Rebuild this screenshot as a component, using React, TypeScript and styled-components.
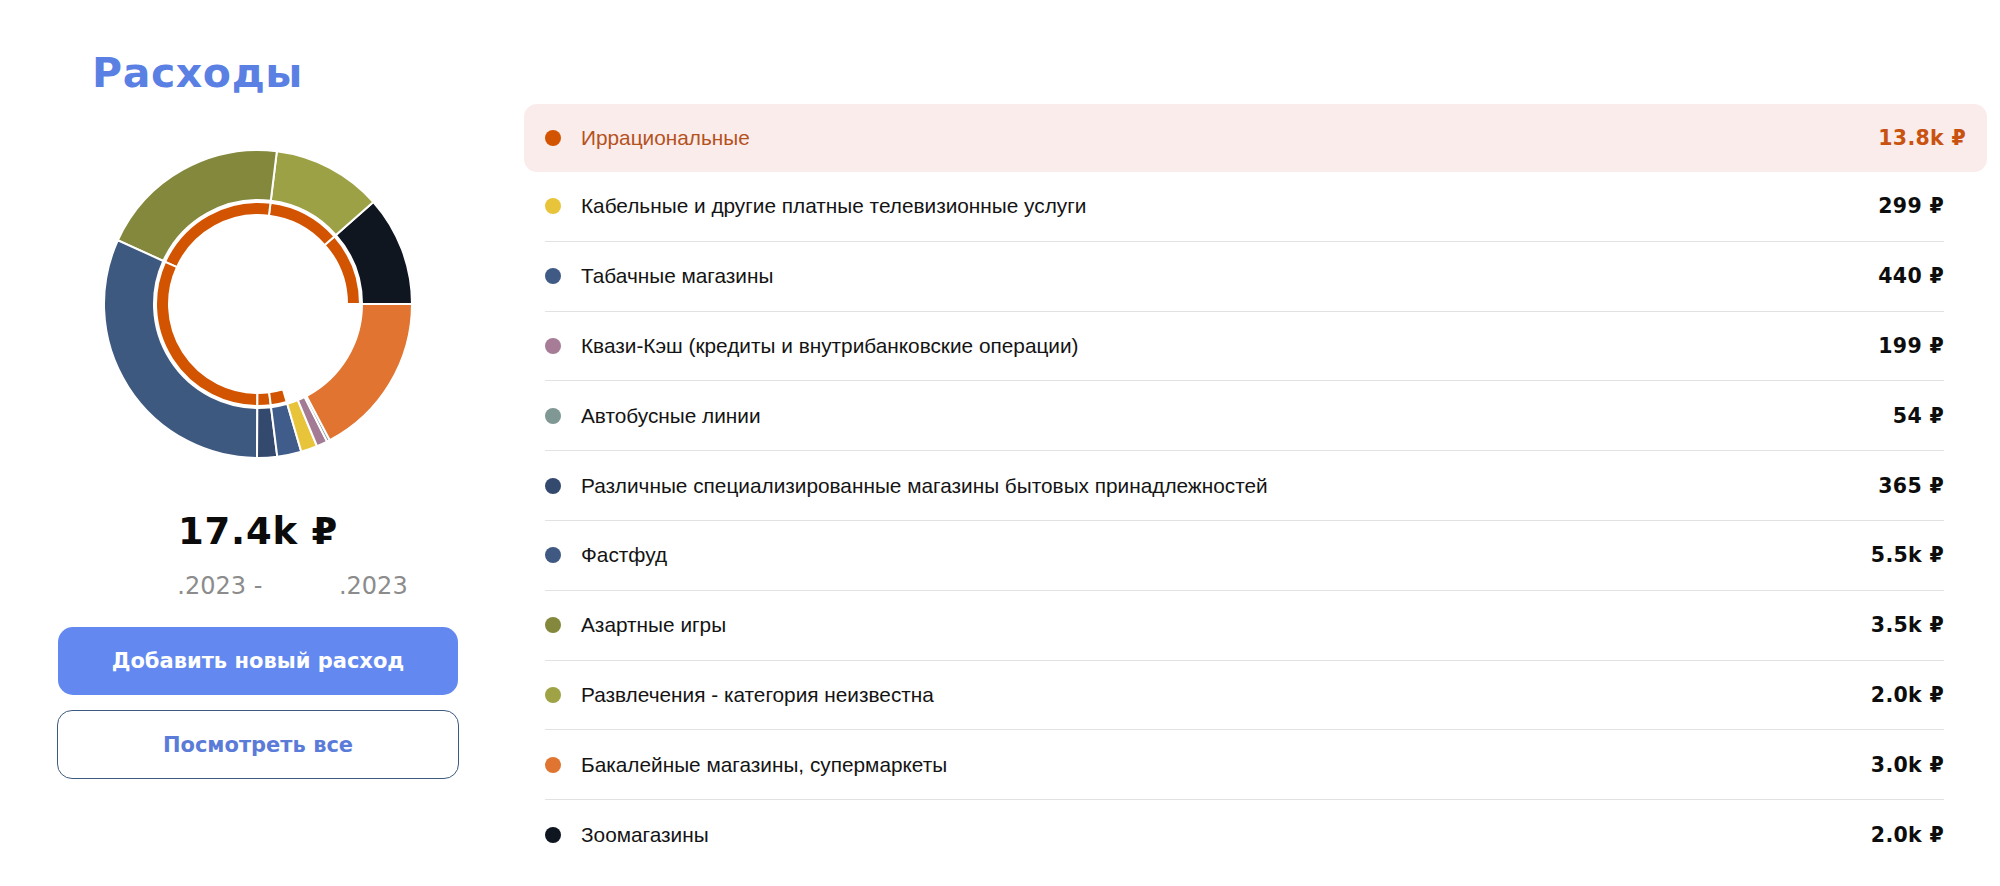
import React from 'react';
import styled, { createGlobalStyle } from 'styled-components';

const GlobalStyle = createGlobalStyle`
  html, body { margin: 0; padding: 0; background: #ffffff; }
  body { font-family: "Liberation Sans", Arial, sans-serif; }
  * { box-sizing: border-box; }
`;

const Page = styled.div`
  display: flex;
  align-items: flex-start;
  width: 2000px;
  min-height: 886px;
  padding: 0 13px 0 57px;
`;

const LeftCol = styled.div`
  width: 402px;
  flex: none;
  display: flex;
  flex-direction: column;
  align-items: center;
`;

const Title = styled.h1`
  align-self: flex-start;
  margin: 49px 0 0 35px;
  font-family: "DejaVu Sans", sans-serif;
  font-weight: 700;
  font-size: 41px;
  line-height: 48px;
  color: #5b80e3;
  letter-spacing: 0.6px;
`;

const ChartBox = styled.div`
  margin-top: 52px;
  width: 310px;
  height: 310px;
`;

const Total = styled.div`
  margin-top: 51px;
  font-family: "DejaVu Sans", sans-serif;
  font-weight: 700;
  font-size: 37px;
  line-height: 44px;
  color: #0b0b0b;
  letter-spacing: 0.8px;
`;

const Period = styled.div`
  margin-top: 18px;
  font-family: "DejaVu Sans", sans-serif;
  font-size: 24px;
  line-height: 28px;
  color: #8c8c8c;
  white-space: pre;
`;

const Redacted = styled.span<{ $w: number }>`
  display: inline-block;
  width: ${(p) => p.$w}px;
`;

const PrimaryButton = styled.button`
  margin-top: 27px;
  width: 400px;
  height: 68px;
  border: none;
  border-radius: 15px;
  background: #6389f0;
  color: #ffffff;
  font-family: "DejaVu Sans", sans-serif;
  font-weight: 700;
  font-size: 21px;
  cursor: pointer;
`;

const SecondaryButton = styled.button`
  margin-top: 15px;
  width: 402px;
  height: 69px;
  border: 1.5px solid #3d5b7e;
  border-radius: 15px;
  background: #ffffff;
  color: #5b7bd8;
  font-family: "DejaVu Sans", sans-serif;
  font-weight: 700;
  font-size: 21px;
  cursor: pointer;
`;

const List = styled.div`
  margin-left: 65px;
  margin-top: 104px;
  flex: 1;
  display: flex;
  flex-direction: column;
`;

const Row = styled.div<{ $active?: boolean; $last?: boolean }>`
  display: flex;
  align-items: center;
  ${(p) =>
    p.$active
      ? `
    height: 68px;
    margin: 0;
    padding: 0 21px;
    background: #fbecec;
    border-radius: 13px;
  `
      : `
    height: ${p.$last ? '68.8px' : '69.8px'};
    margin: 0 43px 0 21px;
    padding: 0;
    border-bottom: ${p.$last ? 'none' : '1px solid #e2e2e2'};
  `}
`;

const Dot = styled.span<{ $color: string }>`
  width: 16px;
  height: 16px;
  border-radius: 50%;
  background: ${(p) => p.$color};
  flex: none;
`;

const Label = styled.span<{ $active?: boolean }>`
  margin-left: 20px;
  flex: 1;
  font-family: "Liberation Sans", Arial, sans-serif;
  font-size: 20.8px;
  color: ${(p) => (p.$active ? '#b4521d' : '#141414')};
`;

const Amount = styled.span<{ $active?: boolean }>`
  font-family: "DejaVu Sans", sans-serif;
  font-weight: 700;
  font-size: 20.5px;
  letter-spacing: 0.3px;
  color: ${(p) => (p.$active ? '#c8520f' : '#0d0d0d')};
  white-space: nowrap;
`;

type Item = { label: string; amount: string; color: string };

const items: Item[] = [
  { label: 'Кабельные и другие платные телевизионные услуги', amount: '299 ₽', color: '#e8c43a' },
  { label: 'Табачные магазины', amount: '440 ₽', color: '#405a86' },
  { label: 'Квази-Кэш (кредиты и внутрибанковские операции)', amount: '199 ₽', color: '#a67c96' },
  { label: 'Автобусные линии', amount: '54 ₽', color: '#7f9894' },
  { label: 'Различные специализированные магазины бытовых принадлежностей', amount: '365 ₽', color: '#34496e' },
  { label: 'Фастфуд', amount: '5.5k ₽', color: '#3f5982' },
  { label: 'Азартные игры', amount: '3.5k ₽', color: '#84883c' },
  { label: 'Развлечения - категория неизвестна', amount: '2.0k ₽', color: '#9fa346' },
  { label: 'Бакалейные магазины, супермаркеты', amount: '3.0k ₽', color: '#e07532' },
  { label: 'Зоомагазины', amount: '2.0k ₽', color: '#0f1620' },
];

type Slice = { value: number; color: string; irrational: boolean };

const slices: Slice[] = [
  { value: 2000, color: '#0f1620', irrational: true },
  { value: 2000, color: '#9da145', irrational: true },
  { value: 3500, color: '#84883c', irrational: true },
  { value: 5500, color: '#3e5980', irrational: true },
  { value: 365, color: '#34496e', irrational: true },
  { value: 440, color: '#405c8a', irrational: true },
  { value: 299, color: '#e8c43a', irrational: false },
  { value: 199, color: '#a47b94', irrational: false },
  { value: 54, color: '#7e9894', irrational: false },
  { value: 3000, color: '#e07430', irrational: false },
];

const C = 155;

function pt(r: number, deg: number): string {
  const a = (deg * Math.PI) / 180;
  return `${(C + r * Math.cos(a)).toFixed(3)} ${(C - r * Math.sin(a)).toFixed(3)}`;
}

function sector(r0: number, r1: number, a0: number, a1: number): string {
  const large = a1 - a0 > 180 ? 1 : 0;
  return [
    `M ${pt(r1, a0)}`,
    `A ${r1} ${r1} 0 ${large} 0 ${pt(r1, a1)}`,
    `L ${pt(r0, a1)}`,
    `A ${r0} ${r0} 0 ${large} 1 ${pt(r0, a0)}`,
    'Z',
  ].join(' ');
}

const Donut: React.FC = () => {
  const total = slices.reduce((s, x) => s + x.value, 0);
  let acc = 0;
  const parts = slices.map((s) => {
    const a0 = (acc / total) * 360;
    acc += s.value;
    const a1 = (acc / total) * 360;
    return { ...s, a0, a1 };
  });
  return (
    <svg width="310" height="310" viewBox="0 0 310 310">
      {parts.map((p, i) => (
        <path key={`o${i}`} d={sector(104, 154, p.a0, p.a1)} fill={p.color} stroke="#ffffff" strokeWidth="2" />
      ))}
      {parts
        .filter((p) => p.irrational)
        .map((p, i) => (
          <path key={`i${i}`} d={sector(89, 102, p.a0, p.a1)} fill="#d35400" stroke="#ffffff" strokeWidth="2" />
        ))}
    </svg>
  );
};

export default function App() {
  return (
    <>
      <GlobalStyle />
      <Page>
        <LeftCol>
          <Title>Расходы</Title>
          <ChartBox>
            <Donut />
          </ChartBox>
          <Total>17.4k ₽</Total>
          <Period>
            <Redacted $w={69} />
            {'.2023 - '}
            <Redacted $w={69} />
            {'.2023'}
          </Period>
          <PrimaryButton>Добавить новый расход</PrimaryButton>
          <SecondaryButton>Посмотреть все</SecondaryButton>
        </LeftCol>
        <List>
          <Row $active>
            <Dot $color="#d35400" />
            <Label $active>Иррациональные</Label>
            <Amount $active>13.8k ₽</Amount>
          </Row>
          {items.map((it, i) => (
            <Row key={it.label} $last={i === items.length - 1}>
              <Dot $color={it.color} />
              <Label>{it.label}</Label>
              <Amount>{it.amount}</Amount>
            </Row>
          ))}
        </List>
      </Page>
    </>
  );
}
